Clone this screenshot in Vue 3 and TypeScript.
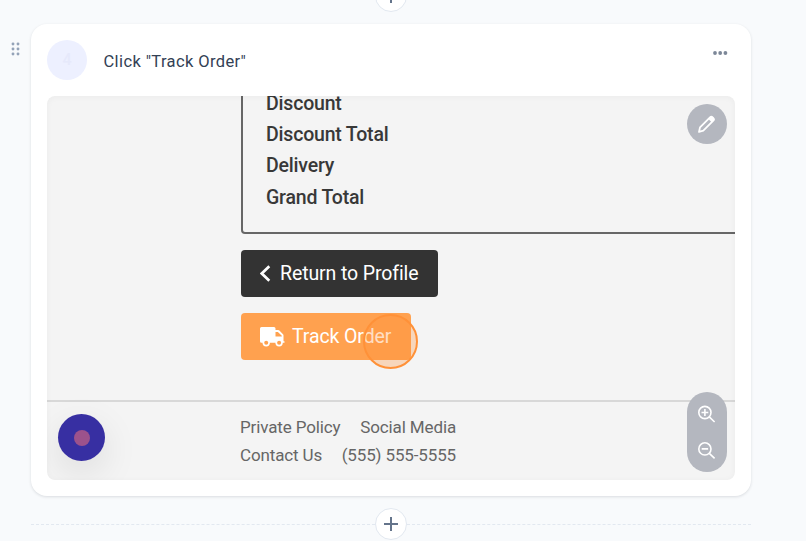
<script setup lang="ts">
const totals: string[] = ['Discount', 'Discount Total', 'Delivery', 'Grand Total']
const dots: number[][] = [[2, 2], [7, 2], [2, 7], [7, 7], [2, 12], [7, 12]]
</script>

<template>
  <main class="page">
    <div class="divider">
      <button class="add" aria-label="Add step">
        <svg width="14" height="14" viewBox="0 0 14 14"><path d="M7 0v14M0 7h14" stroke="#64748b" stroke-width="2" /></svg>
      </button>
    </div>

    <div class="step">
      <svg class="grip" width="9" height="14" viewBox="0 0 9 14">
        <circle v-for="(d, i) in dots" :key="i" :cx="d[0]" :cy="d[1]" r="1.45" fill="#94a3b8" />
      </svg>
      <section class="card">
        <header class="head">
          <span class="number">4</span>
          <span class="title">Click "Track Order"</span>
          <svg class="more" width="16" height="6" viewBox="0 0 16 6" fill="#7c8798">
            <circle cx="3" cy="3" r="1.9" /><circle cx="8.2" cy="3" r="1.9" /><circle cx="13.4" cy="3" r="1.9" />
          </svg>
        </header>

        <div class="shot">
          <div class="order">
            <div v-for="t in totals" :key="t" class="total">{{ t }}</div>
          </div>
          <div class="actions">
            <div class="btn dark">
              <svg width="12" height="18" viewBox="0 0 12 18"><path d="M9.300 1.300L1.800 8.500L9.300 15.700" fill="none" stroke="#fff" stroke-width="2.700" /></svg>
              <span>Return to Profile</span>
            </div>
            <div class="btn orange">
              <svg width="25" height="20" viewBox="0 0 25 20">
                <path fill="#fff" fill-rule="evenodd" d="M1.5 0H14q1.5 0 1.5 1.5V3h2.7q.7 0 1.2.5l3.6 3.7q.5.5.5 1.2v5.8h.5q.7 0 .7.8t-.7.8h-1.2a3.7 3.7 0 0 1-7.4 0h-5.5a3.7 3.7 0 0 1-7.4 0h-1Q0 15.800 0 14.300V1.500Q0 0 1.500 0ZM15.500 4.900v4.500h6.300v-.7l-3.900-3.800Z" />
                <circle cx="6.200" cy="15.800" r="2" fill="#ffa14f" /><circle cx="19.100" cy="15.800" r="2" fill="#ffa14f" />
              </svg>
              <span>Track Order</span>
            </div>
          </div>
          <footer class="foot">
            <div class="links"><span>Private Policy</span><span>Social Media</span></div>
            <div class="links"><span>Contact Us</span><span>(555) 555-5555</span></div>
          </footer>
          <span class="halo"></span>
          <span class="bubble"><i></i></span>
          <button class="edit" aria-label="Edit">
            <svg width="18" height="18" viewBox="0 0 18 18">
              <path d="M1 16.900l1-4.500L12 2.400q1.300-1.200 2.600 0l.7.700q1.200 1.300 0 2.600l-10 10Z" fill="none" stroke="#fff" stroke-width="1.800" stroke-linejoin="round" />
              <path d="M10.600 3.800l1.500-1.500q1.300-1.200 2.600 0l.7.700q1.200 1.300 0 2.600L13.900 7.100Z" fill="#fff" stroke="#fff" />
            </svg>
          </button>
          <div class="zoom">
            <svg width="18" height="18" viewBox="0 0 18 18" fill="none" stroke="#fff" stroke-width="1.600"><circle cx="6.900" cy="7.500" r="6.100" /><path d="M11.300 11.900l5.300 5.100M3.500 7.500h6.800M6.900 4.100v6.800" /></svg>
            <svg width="18" height="18" viewBox="0 0 18 18" fill="none" stroke="#fff" stroke-width="1.600"><circle cx="6.900" cy="6.900" r="6.100" /><path d="M11.300 11.300l5.300 5.100M3.700 6.900h6.400" /></svg>
          </div>
        </div>
      </section>
    </div>

    <div class="divider">
      <button class="add" aria-label="Add step">
        <svg width="14" height="14" viewBox="0 0 14 14"><path d="M7 0v14M0 7h14" stroke="#64748b" stroke-width="2" /></svg>
      </button>
    </div>
  </main>
</template>

<style>
body { margin: 0; background: #f8fafc; overflow: hidden; }
</style>

<style scoped>
.page {
  box-sizing: border-box;
  width: 806px;
  height: 561px;
  margin-top: -20px;
  display: flex;
  flex-direction: column;
  gap: 12px;
  background: #f8fafc;
  font-family: Roboto, "Liberation Sans", sans-serif;
  overflow: hidden;
}
button { padding: 0; border: 0; }
.divider {
  width: 720px;
  height: 32px;
  margin-left: 31px;
  display: flex;
  align-items: center;
  justify-content: center;
  flex-shrink: 0;
}
.divider::before, .divider::after { content: ""; flex: 1; border-top: 1px dashed #e2e8f0; }
.add {
  box-sizing: border-box;
  width: 32px;
  height: 32px;
  border: 1px solid #e2e8f0;
  border-radius: 50%;
  background: #fff;
  display: flex;
  align-items: center;
  justify-content: center;
}
.step { display: flex; flex-shrink: 0; }
.grip { margin: 18px 11px 0 11px; flex-shrink: 0; }
.card {
  box-sizing: border-box;
  width: 720px;
  height: 472px;
  padding: 16px;
  border-radius: 16px;
  background: #fff;
  box-shadow: 0 1px 3px rgba(15, 23, 42, .13);
}
.head { display: flex; height: 56px; }
.number {
  width: 40px;
  height: 40px;
  border-radius: 50%;
  background: #edf0ff;
  color: #e6e9fb;
  font-size: 16px;
  font-weight: 500;
  line-height: 40px;
  text-align: center;
}
.title { margin-left: 16.500px; line-height: 43px; font-size: 16.500px; letter-spacing: .380px; color: #334155; white-space: nowrap; }
.more { margin: 10px 7px 0 auto; }
.shot {
  position: relative;
  height: 384px;
  border-radius: 8px;
  background: #f4f4f4;
  overflow: hidden;
  display: flex;
  flex-direction: column;
}
.shot::after {
  content: "";
  position: absolute;
  inset: 0;
  border-radius: 8px;
  box-shadow: inset 0 1px 6px rgba(0, 0, 0, .04);
  pointer-events: none;
}
.order {
  box-sizing: border-box;
  height: 146px;
  margin: -8px -10px 0 193.500px;
  padding-left: 23.500px;
  border: 2px solid #666;
  border-top: 0;
  border-radius: 0 0 4px 4px;
}
.total { height: 31.200px; line-height: 31.600px; font-size: 19.500px; letter-spacing: -.190px; font-weight: 500; color: #383838; }
.actions { margin: 16px 0 0 193.500px; display: flex; flex-direction: column; align-items: flex-start; gap: 16px; }
.btn { box-sizing: border-box; height: 47px; display: flex; align-items: center; padding-left: 19.500px; border-radius: 4px; color: #fff; font-size: 19.500px; letter-spacing: -.110px; line-height: 24px; white-space: nowrap; }
.dark { width: 197px; background: #333; }
.dark svg { margin-right: 8px; }
.orange { width: 170.500px; background: #ffa14f; }
.orange svg { margin-right: 7px; }
.foot { flex: 1; box-sizing: border-box; margin-top: 40px; border-top: 2px solid #d8d8d8; padding: 11px 0 0 193px; color: #666; font-size: 17px; letter-spacing: -.130px; line-height: 28px; }
.links { width: 216px; display: flex; justify-content: space-between; white-space: nowrap; }
.halo {
  position: absolute;
  left: 316px;
  top: 218px;
  box-sizing: border-box;
  width: 55px;
  height: 55px;
  border: 2px solid #ff9138;
  border-radius: 50%;
  background: rgba(255, 145, 56, .3);
}
.bubble {
  position: absolute;
  left: 11px;
  top: 318px;
  width: 47px;
  height: 47px;
  border-radius: 50%;
  background: #372fa2;
  box-shadow: 0 12px 36px rgba(0, 0, 0, .1);
  display: flex;
  align-items: center;
  justify-content: center;
}
.bubble i { width: 16px; height: 16px; border-radius: 50%; background: #9c528c; }
.edit {
  position: absolute;
  top: 8px;
  right: 8px;
  width: 40px;
  height: 40px;
  border-radius: 50%;
  background: #b4b7bf;
  display: flex;
  align-items: center;
  justify-content: center;
}
.zoom {
  position: absolute;
  right: 8px;
  bottom: 8px;
  box-sizing: border-box;
  width: 40px;
  height: 80px;
  padding: 13px 0 12px;
  border-radius: 20px;
  background: #b4b7bf;
  display: flex;
  flex-direction: column;
  align-items: center;
  justify-content: space-between;
}
</style>
